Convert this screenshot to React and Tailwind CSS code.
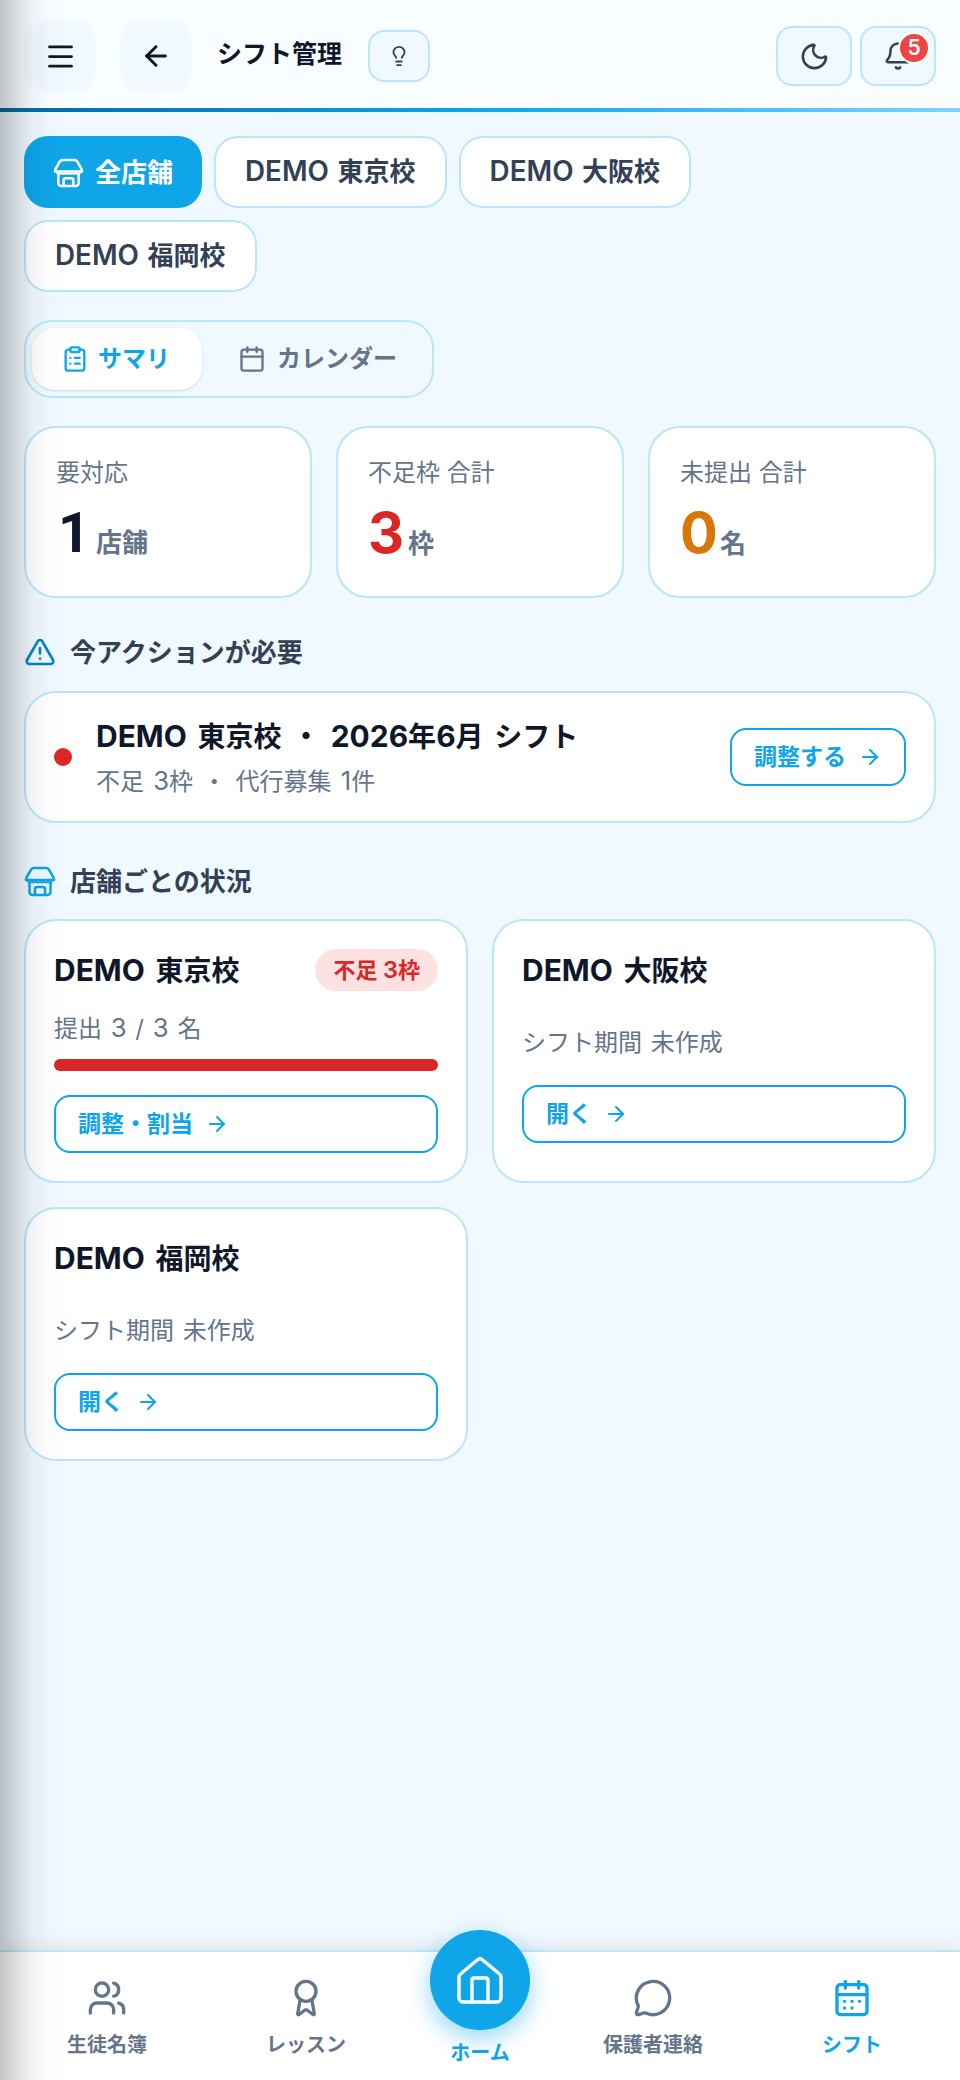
import React from 'react';
import {
  ArrowLeft, ArrowRight, Award, Bell, Calendar, ClipboardList,
  Lightbulb, Menu, MessageCircle, Moon, TriangleAlert, Users,
} from 'lucide-react';

// latin glyphs sit a bit larger than the CJK ones in this design
function L({ children }) {
  return <span className="text-[1.07em]">{children}</span>;
}

function StoreIcon({ size, className }) {
  return (
    <svg width={size} height={size} viewBox="0 0 32 32" fill="none" stroke="currentColor" strokeWidth="2.6" strokeLinecap="round" strokeLinejoin="round" className={className}>
      <path d="M10 3h12c1.400 0 2.400.6 3.100 1.800l4.200 7.400c.5.9.7 1.800.7 2.800H2c0-1 .2-1.900.7-2.800l4.200-7.400C7.600 3.600 8.600 3 10 3Z" />
      <path d="M4 15.500a2 2 0 0 0 4 0a2 2 0 0 0 4 0a2 2 0 0 0 4 0a2 2 0 0 0 4 0a2 2 0 0 0 4 0a2 2 0 0 0 4 0" strokeWidth="1.800" />
      <path d="M5.500 18v9a3 3 0 0 0 3 3h15a3 3 0 0 0 3-3v-9" />
      <path d="M11 30v-6a2 2 0 0 1 2-2h6a2 2 0 0 1 2 2v6" />
    </svg>
  );
}

function HomeIcon() {
  return (
    <svg width="52" height="52" viewBox="0 0 52 52" fill="none" stroke="currentColor" strokeWidth="3.400" strokeLinecap="round" strokeLinejoin="round">
      <path d="M23.500 5.800a4 4 0 0 1 5 0L45.500 20a4 4 0 0 1 1.500 3v21a4 4 0 0 1-4 4H9a4 4 0 0 1-4-4V23a4 4 0 0 1 1.500-3Z" />
      <path d="M18 48V26a2 2 0 0 1 2-2h12a2 2 0 0 1 2 2v22" />
    </svg>
  );
}

function ShiftIcon() {
  return (
    <svg width="40" height="40" viewBox="0 0 24 24" fill="none" stroke="currentColor" strokeWidth="2" strokeLinecap="round" strokeLinejoin="round">
      <path d="M8 2v4" />
      <path d="M16 2v4" />
      <rect x="3" y="4" width="18" height="18" rx="2" />
      <path d="M3 10h18" />
      <path d="M7.500 14h.01" />
      <path d="M12 14h.01" />
      <path d="M16.500 14h.01" />
      <path d="M7.500 18h.01" />
      <path d="M12 18h.01" />
    </svg>
  );
}

function Chip({ city }) {
  return (
    <div className="h-[72px] px-[29px] flex items-center rounded-[24px] border-2 border-[#bae6fd] bg-white text-[26px] font-semibold text-[#334155] [word-spacing:2px]">
      <span><L>DEMO</L> {city}</span>
    </div>
  );
}

function StatCard({ label, value, unit, color, valueClass }) {
  return (
    <div className="h-[172px] rounded-[32px] border-2 border-[#bae6fd] bg-white px-[30px] pt-[27px]">
      <div className="text-[24px] leading-[36px] text-[#64748b]">{label}</div>
      <div className="mt-[8px] flex items-baseline gap-[4px]">
        <span className={`w-[36px] text-center text-[56px] leading-[68px] font-bold ${color} ${valueClass}`}>{value}</span>
        <span className="text-[26px] font-semibold text-[#64748b]">{unit}</span>
      </div>
    </div>
  );
}

function SectionTitle({ icon, label }) {
  return (
    <div className="flex items-center gap-[14px] h-[32px]">
      {icon}
      <span className="text-[26px] font-bold text-[#334155]">{label}</span>
    </div>
  );
}

function OutlineButton({ label, className }) {
  return (
    <div className={`h-[58px] flex items-center gap-[12px] px-[22px] rounded-[16px] border-2 border-[#0ea5e9] text-[#0ea5e9] text-[23px] font-bold ${className}`}>
      {label}
      <ArrowRight size={24} strokeWidth={2} />
    </div>
  );
}

function StoreCard({ children }) {
  return (
    <div className="rounded-[32px] border-2 border-[#bae6fd] bg-white px-[28px] pt-[28px] pb-[28px]">
      {children}
    </div>
  );
}

function EmptyStore({ city }) {
  return (
    <StoreCard>
      <div className="h-[42px] flex items-center text-[28px] font-bold text-[#0f172a] [word-spacing:4px]">
        <span><L>DEMO</L> {city}</span>
      </div>
      <div className="mt-[34px] h-[36px] leading-[36px] text-[24px] text-[#64748b] [word-spacing:2px]">シフト期間 未作成</div>
      <OutlineButton label="開く" className="mt-[24px]" />
    </StoreCard>
  );
}

function NavItem({ icon, label, active }) {
  return (
    <div className={`flex-1 flex flex-col items-center pt-[26px] ${active ? 'text-[#0ea5e9]' : 'text-[#64748b]'}`}>
      {icon}
      <span className="mt-[12px] text-[20px] leading-[30px] font-semibold">{label}</span>
    </div>
  );
}

export default function App() {
  return (
    <div className="relative h-[2080px] w-full flex flex-col overflow-hidden bg-[#f0f9ff] font-['Inter','Noto_Sans_CJK_JP',sans-serif]">
      {/* header */}
      <header className="h-[112px] shrink-0 bg-[#f9fdff] flex items-start">
        <div className="w-full h-[112px] flex items-center px-[24px]">
          <div className="w-[72px] h-[72px] rounded-[24px] bg-[#f0f9ff] flex items-center justify-center text-[#0f172a]">
            <Menu size={33} strokeWidth={2} />
          </div>
          <div className="ml-[24px] w-[72px] h-[72px] rounded-[24px] bg-[#f0f9ff] flex items-center justify-center text-[#0f172a]">
            <ArrowLeft size={32} strokeWidth={2.2} />
          </div>
          <div className="ml-[25px] text-[25px] font-bold text-[#0f172a] -mt-[3px]">シフト管理</div>
          <div className="ml-[26px] w-[62px] h-[52px] rounded-[16px] border-2 border-[#bae6fd] bg-[#f0f9ff] flex items-center justify-center text-[#334155]">
            <Lightbulb size={22} strokeWidth={2} />
          </div>
          <div className="ml-auto flex gap-[8px]">
            <div className="w-[76px] h-[60px] rounded-[16px] border-2 border-[#bae6fd] bg-[#f0f9ff] flex items-center justify-center text-[#334155]">
              <Moon size={31} strokeWidth={2} />
            </div>
            <div className="relative w-[76px] h-[60px] rounded-[16px] border-2 border-[#bae6fd] bg-[#f0f9ff] flex items-center justify-center text-[#334155]">
              <Bell size={30} strokeWidth={2} />
              <span className="absolute top-[4px] right-[4px] w-[32px] h-[32px] rounded-full bg-[#ef4444] border-2 border-white flex items-center justify-center text-[21px] font-semibold text-white">5</span>
            </div>
          </div>
        </div>
      </header>
      <div className="absolute top-[108px] left-0 right-0 h-[4px] bg-[linear-gradient(90deg,#0369a1,#0ea5e9_50%,#7dd3fc)]" />

      <main className="flex-1 px-[24px] pt-[24px]">
        {/* store chips */}
        <div className="flex flex-wrap gap-[12px] max-w-[680px]">
          <div className="h-[72px] w-[178px] justify-center flex items-center gap-[11px] rounded-[24px] bg-[#0ea5e9] text-[26px] font-semibold text-white">
            <StoreIcon size={31} />
            全店舗
          </div>
          <Chip city="東京校" />
          <Chip city="大阪校" />
          <Chip city="福岡校" />
        </div>

        {/* tabs */}
        <div className="mt-[28px] w-[410px] h-[78px] rounded-[28px] border-2 border-[#bae6fd] flex items-center px-[6px]">
          <div className="w-[170px] h-[62px] pl-[29px] rounded-[22px] bg-white shadow-sm flex items-center gap-[9px] text-[#0ea5e9] text-[24px] font-bold">
            <ClipboardList size={28} strokeWidth={2} />
            サマリ
          </div>
          <div className="flex-1 pl-[36px] flex items-center gap-[11px] text-[#64748b] text-[24px] font-bold">
            <Calendar size={28} strokeWidth={2} />
            カレンダー
          </div>
        </div>

        {/* totals */}
        <div className="mt-[28px] grid grid-cols-3 gap-[24px]">
          <StatCard label="要対応" value="1" unit="店舗" color="text-[#0f172a]" valueClass="font-['Roboto']" />
          <StatCard label="不足枠 合計" value="3" unit="枠" color="text-[#dc2626]" />
          <StatCard label="未提出 合計" value="0" unit="名" color="text-[#d97706]" />
        </div>

        {/* action needed */}
        <div className="mt-[38px]">
          <SectionTitle icon={<TriangleAlert size={32} strokeWidth={2} className="text-[#0284c7]" />} label="今アクションが必要" />
        </div>
        <div className="mt-[23px] h-[132px] rounded-[32px] border-2 border-[#bae6fd] bg-white pl-[28px] pr-[28px] flex items-center">
          <div className="w-[18px] h-[18px] rounded-full bg-[#dc2626]" />
          <div className="ml-[24px] flex-1">
            <div className="text-[28px] leading-[42px] font-bold text-[#0f172a] [word-spacing:4px]">
              <L>DEMO</L> 東京校 ・ <L>2026</L>年<L>6</L>月 シフト
            </div>
            <div className="mt-[5px] text-[24px] leading-[36px] text-[#64748b] [word-spacing:2.5px]">
              不足 <L>3</L>枠 ・ 代行募集 <L>1</L>件
            </div>
          </div>
          <OutlineButton label="調整する" />
        </div>

        {/* per store */}
        <div className="mt-[42px]">
          <SectionTitle icon={<StoreIcon size={32} className="text-[#0ea5e9]" />} label="店舗ごとの状況" />
        </div>
        <div className="mt-[22px] grid grid-cols-2 gap-[24px]">
          <StoreCard>
            <div className="h-[42px] flex items-center justify-between">
              <span className="text-[28px] font-bold text-[#0f172a] [word-spacing:4px]"><L>DEMO</L> 東京校</span>
              <span className="h-[42px] px-[18px] flex items-center rounded-full bg-[#fee2e2] text-[22px] font-semibold text-[#dc2626]">
                <span>不足 <L>3</L>枠</span>
              </span>
            </div>
            <div className="mt-[19px] h-[36px] leading-[36px] text-[24px] text-[#64748b] [word-spacing:2px]">
              提出 <L>3</L> / <L>3</L> 名
            </div>
            <div className="mt-[13px] h-[12px] rounded-full bg-[#dc2626]" />
            <OutlineButton label="調整・割当" className="mt-[24px]" />
          </StoreCard>
          <EmptyStore city="大阪校" />
          <EmptyStore city="福岡校" />
        </div>
      </main>

      {/* bottom nav */}
      <nav className="relative h-[130px] shrink-0 bg-white border-t-2 border-[#bae6fd] shadow-[0_-4px_20px_rgba(0,0,0,0.08)] flex">
        <div className="w-[214px] flex"><NavItem icon={<Users size={40} strokeWidth={2} />} label="生徒名簿" /></div>
        <div className="w-[184px] flex"><NavItem icon={<Award size={40} strokeWidth={2} />} label="レッスン" /></div>
        <div className="w-[164px] flex flex-col items-center justify-end pb-[12px] text-[#0ea5e9]">
          <span className="text-[20px] leading-[30px] font-semibold">ホーム</span>
        </div>
        <div className="w-[182px] flex"><NavItem icon={<MessageCircle size={40} strokeWidth={2} />} label="保護者連絡" /></div>
        <div className="flex-1 flex"><NavItem icon={<ShiftIcon />} label="シフト" active /></div>
        <div className="absolute left-[430px] -top-[22px] w-[100px] h-[100px] rounded-full bg-[#0ea5e9] shadow-[0_8px_24px_rgba(14,165,233,0.45)] flex items-center justify-center text-white">
          <HomeIcon />
        </div>
      </nav>

      {/* drawer edge shadow */}
      <div className="pointer-events-none absolute inset-y-0 left-0 w-[66px] bg-[linear-gradient(90deg,rgba(0,0,0,.23),rgba(0,0,0,.11)_20px,rgba(0,0,0,.04)_33px,rgba(0,0,0,.01)_50px,transparent_66px)]" />
    </div>
  );
}
